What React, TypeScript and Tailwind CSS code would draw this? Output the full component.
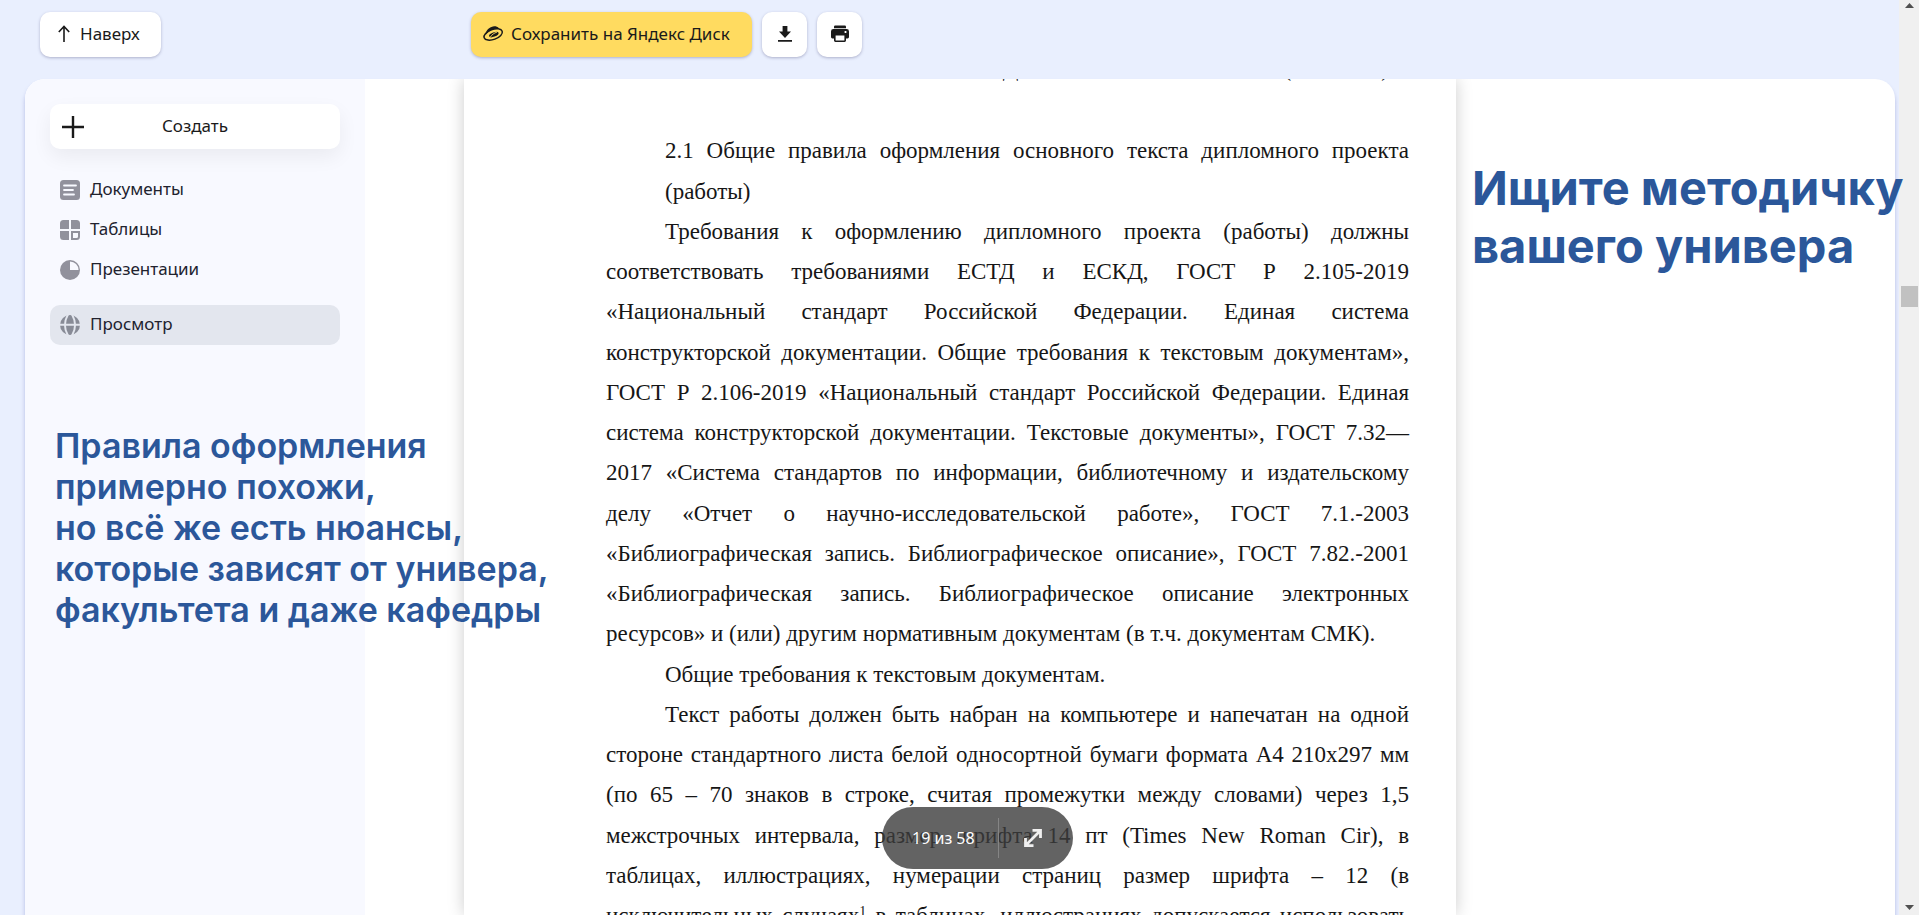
import React from 'react';

const bodyLines = [
  { text: '2.1 Общие правила оформления основного текста дипломного проекта', indent: true },
  { text: '(работы)', indent: true, last: true },
  { text: 'Требования к оформлению дипломного проекта (работы) должны', indent: true },
  { text: 'соответствовать требованиями ЕСТД и ЕСКД, ГОСТ Р 2.105-2019' },
  { text: '«Национальный стандарт Российской Федерации. Единая система' },
  { text: 'конструкторской документации. Общие требования к текстовым документам»,' },
  { text: 'ГОСТ Р 2.106-2019 «Национальный стандарт Российской Федерации. Единая' },
  { text: 'система конструкторской документации. Текстовые документы», ГОСТ 7.32—' },
  { text: '2017 «Система стандартов по информации, библиотечному и издательскому' },
  { text: 'делу «Отчет о научно-исследовательской работе», ГОСТ 7.1.-2003' },
  { text: '«Библиографическая запись. Библиографическое описание», ГОСТ 7.82.-2001' },
  { text: '«Библиографическая запись. Библиографическое описание электронных' },
  { text: 'ресурсов» и (или) другим нормативным документам (в т.ч. документам СМК).', last: true },
  { text: 'Общие требования к текстовым документам.', indent: true, last: true },
  { text: 'Текст работы должен быть набран на компьютере и напечатан на одной', indent: true },
  { text: 'стороне стандартного листа белой односортной бумаги формата А4 210х297 мм' },
  { text: '(по 65 – 70 знаков в строке, считая промежутки между словами) через 1,5' },
  { text: 'межстрочных интервала, размер шрифта 14 пт (Times New Roman Cir), в' },
  { text: 'таблицах, иллюстрациях, нумерации страниц размер шрифта – 12 (в' },
];

const ArrowUpIcon = () => (
  <svg width="12" height="18" viewBox="0 0 12 18" fill="none" stroke="#1a1a1a" strokeWidth="1.6">
    <path d="M6 17V1.5M.8 7 6 1.5 11.2 7" />
  </svg>
);

const DiskIcon = () => (
  <svg width="20" height="14" viewBox="0 0 20 14" className="overflow-visible">
    <g transform="rotate(-20 10 7)">
      <ellipse cx="10" cy="7.5" rx="9.6" ry="5" fill="none" stroke="#1a1a1a" strokeWidth="1.5" />
      <path d="M2.8 5.4C4.2 1.6 7.4-.2 11-.2c3 0 5.4 1.4 6.600 3.800-2.600-.9-5-1.200-7.600-.8-2.600.4-5.200 1.200-7.200 2.600Z" fill="#1a1a1a" />
      <ellipse cx="10.600" cy="7.800" rx="5" ry="2.200" fill="#1a1a1a" />
      <path d="M6.500 9c2-1.800 5-2.600 8-2.400" fill="none" stroke="#ffdb60" strokeWidth=".8" />
    </g>
  </svg>
);

const DownloadIcon = () => (
  <svg width="14" height="16" viewBox="0 0 14 16" fill="#1a1a1a">
    <path d="M4.600 0h4.800v5.400H13L7 12 1 5.400h3.600zM0 14h14v1.700H0z" />
  </svg>
);

const PrinterIcon = () => (
  <svg width="18" height="18" viewBox="0 0 18 18" fill="#1a1a1a">
    <path d="M4.200.6h9.600A1.200 1.200 0 0 1 15 1.800v1.400H3V1.800A1.200 1.200 0 0 1 4.200.6Z" />
    <path
      fillRule="evenodd"
      d="M2.400 4h13.200A2.400 2.400 0 0 1 18 6.400V12a1.400 1.400 0 0 1-1.400 1.400H15v2.200a1.400 1.400 0 0 1-1.400 1.400H4.400A1.400 1.400 0 0 1 3 15.600v-2.200H1.400A1.400 1.400 0 0 1 0 12V6.400A2.400 2.400 0 0 1 2.400 4ZM4.600 10.400v5.200h8.800v-5.200ZM13.600 6.100v1.800h1.800V6.100Z"
    />
  </svg>
);

const PlusIcon = () => (
  <svg width="22" height="22" viewBox="0 0 22 22" stroke="#1a1a1a" strokeWidth="2.4">
    <path d="M11 0v22M0 11h22" />
  </svg>
);

const DocIcon = () => (
  <svg width="20" height="20" viewBox="0 0 20 20">
    <rect width="20" height="20" rx="3.5" fill="#91919c" />
    <path d="M4 5.500h12M4 10h9M4 14.500h10" stroke="#f8f9ff" strokeWidth="1.8" strokeLinecap="round" />
  </svg>
);

const TableIcon = () => (
  <svg width="20" height="20" viewBox="0 0 20 20" fill="#91919c">
    <path d="M3.500 0H9v9H0V3.500A3.500 3.500 0 0 1 3.500 0ZM11 0h5.500A3.500 3.500 0 0 1 20 3.500V9h-9ZM0 11h9v9H3.500A3.500 3.500 0 0 1 0 16.500Z" />
    <path d="M12 12h7v4.500a2.500 2.500 0 0 1-2.500 2.500H12Z" fill="none" stroke="#91919c" strokeWidth="2" />
  </svg>
);

const PieIcon = () => (
  <svg width="20" height="20" viewBox="0 0 20 20">
    <circle cx="10" cy="10" r="10" fill="#91919c" />
    <path d="M10 10V1.400A8.600 8.600 0 0 1 18.600 10Z" fill="#f8f9ff" />
  </svg>
);

const GlobeIcon = () => (
  <svg width="20" height="20" viewBox="0 0 20 20">
    <circle cx="10" cy="10" r="10" fill="#888b96" />
    <path d="M0 9.800h20M8-.5C4.200 6 4.200 14 8 20.500M12-.5c3.800 6.500 3.800 14.500 0 21" fill="none" stroke="#e3e6ee" strokeWidth="1.9" />
  </svg>
);

const ExpandIcon = () => (
  <svg width="18" height="20" viewBox="0 0 18 20" fill="none" stroke="#f0f0f0" strokeWidth="2.8">
    <path d="M8.500 2.400h8V10M1.500 10v7.600h8M16 3 2 17" />
  </svg>
);

const navItems = [
  { label: 'Документы', icon: <DocIcon /> },
  { label: 'Таблицы', icon: <TableIcon /> },
  { label: 'Презентации', icon: <PieIcon /> },
];

const Header: React.FC = () => (
  <header className="mr-1 ml-[25px] grid h-[79px] shrink-0 grid-cols-[1fr_992px_1fr] pt-3 text-[17px] text-[#1a1a1a]">
    <div className="pl-[15px]">
      <button type="button" className="flex h-[45px] w-[121px] items-center gap-2.5 rounded-[10px] bg-white pb-0.5 pl-[18px] shadow-[0_1px_3px_rgba(60,60,110,0.35)]">
        <ArrowUpIcon />
        Наверх
      </button>
    </div>
    <div className="flex gap-2.5 pl-[7px]">
      <button type="button" className="flex h-[45px] w-[281px] items-center gap-2 rounded-[10px] bg-[#ffdb60] pb-0.5 pl-3 whitespace-nowrap shadow-[0_1px_3px_rgba(60,60,110,0.35)]">
        <DiskIcon />
        Сохранить на Яндекс Диск
      </button>
      <button type="button" aria-label="Скачать" className="flex size-[45px] items-center justify-center rounded-[10px] bg-white pb-0.5 shadow-[0_1px_3px_rgba(60,60,110,0.35)]">
        <DownloadIcon />
      </button>
      <button type="button" aria-label="Печать" className="flex size-[45px] items-center justify-center rounded-[10px] bg-white pb-0.5 shadow-[0_1px_3px_rgba(60,60,110,0.35)]">
        <PrinterIcon />
      </button>
    </div>
  </header>
);

const Sidebar: React.FC = () => (
  <aside className="h-full w-[340px] rounded-tl-[20px] bg-[#f8f9ff] px-[25px] pt-[25px] text-[17px] text-[#21222e]">
    <button type="button" className="grid h-[45px] w-full grid-cols-[22px_1fr_22px] items-center rounded-[10px] bg-white px-3 text-[#1a1a1a] shadow-[0_8px_20px_rgba(0,0,0,0.06)]">
      <PlusIcon />
      <span className="pb-0.5">Создать</span>
    </button>
    <nav className="pt-[21px]">
      {navItems.map(item => (
        <a key={item.label} href="#" className="flex h-10 items-center gap-2.5 px-2.5">
          {item.icon}
          <span className="pb-0.5">{item.label}</span>
        </a>
      ))}
      <a href="#" className="mt-[15px] flex h-10 items-center gap-2.5 rounded-[10px] bg-[#e3e6ee] px-2.5">
        <GlobeIcon />
        <span className="pb-0.5">Просмотр</span>
      </a>
    </nav>
  </aside>
);

const DocumentPage: React.FC = () => (
  <article className="h-full overflow-hidden bg-white pr-[47px] pl-[142px] font-['Liberation_Serif',serif] text-[23px] leading-10 text-[#161616]">
    <div className="-mt-[30px] pr-5 text-right whitespace-nowrap">
      ДИПЛОМНОГО ПРОЕКТА (РАБОТЫ)
    </div>
    <div className="pt-[42px]">
      {bodyLines.map(line => (
        <p
          key={line.text}
          className={`whitespace-nowrap nth-[4n+2]:pt-px ${line.indent ? 'pl-[59px]' : ''} ${line.last ? '' : '[text-align-last:justify]'}`}
        >
          {line.text}
        </p>
      ))}
      <p className="whitespace-nowrap [text-align-last:justify]">
        исключительных случаях<sup className="text-sm">1</sup> в таблицах, иллюстрациях допускается использовать
      </p>
    </div>
  </article>
);

const PageControl: React.FC = () => (
  <div className="absolute top-[728px] left-[418px] flex h-[62px] w-[191px] items-center rounded-full bg-[rgba(60,60,60,0.8)] text-white">
    <span className="w-[116px] pl-[30px] whitespace-nowrap">19 из 58</span>
    <span className="h-10 w-px bg-[#858585]" />
    <button type="button" aria-label="Во весь экран" className="flex h-full flex-1 items-center pl-[25px]">
      <ExpandIcon />
    </button>
  </div>
);

const Scrollbar: React.FC = () => (
  <div className="flex w-5 shrink-0 flex-col items-center bg-[#f0f0f0] pr-px pl-0.5">
    <svg width="9" height="5" viewBox="0 0 9 5" className="mt-[3px]" fill="#505050">
      <path d="M0 5 4.500 0 9 5z" />
    </svg>
    <div className="mt-[278px] h-[21px] w-[17px] bg-[#c1c1c1]" />
    <svg width="9" height="5" viewBox="0 0 9 5" className="mt-auto mb-[5px]" fill="#505050">
      <path d="M0 0h9L4.500 5z" />
    </svg>
  </div>
);

const App: React.FC = () => (
  <div className="flex h-screen overflow-hidden bg-[#e9effe] font-['Noto_Sans',sans-serif] text-base">
    <div className="flex min-w-0 flex-1 flex-col">
      <Header />
      <main className="mr-1 ml-[25px] grid min-h-0 flex-1 grid-cols-[1fr_992px_1fr] rounded-t-[20px] bg-white shadow-[0_4px_4px_rgba(100,110,190,0.4)]">
        <div className="relative">
          <Sidebar />
          <p className="absolute top-[346px] left-[30px] z-10 font-['Inter',sans-serif] text-[34px] leading-[41px] font-semibold whitespace-nowrap text-[#2b579a]">
            Правила оформления<br />
            примерно похожи,<br />
            но всё же есть нюансы,<br />
            которые зависят от универа,<br />
            факультета и даже кафедры
          </p>
        </div>
        <div className="relative min-h-0 shadow-[0_0_16px_rgba(0,0,0,0.2)] [clip-path:inset(0_-20px)]">
          <DocumentPage />
          <PageControl />
        </div>
        <div className="relative">
          <p className="absolute top-[80px] left-4 z-10 font-['Inter',sans-serif] text-[47px] leading-[58px] font-bold whitespace-nowrap text-[#2b579a]">
            Ищите методичку<br />
            вашего универа
          </p>
        </div>
      </main>
    </div>
    <Scrollbar />
  </div>
);

export default App;
